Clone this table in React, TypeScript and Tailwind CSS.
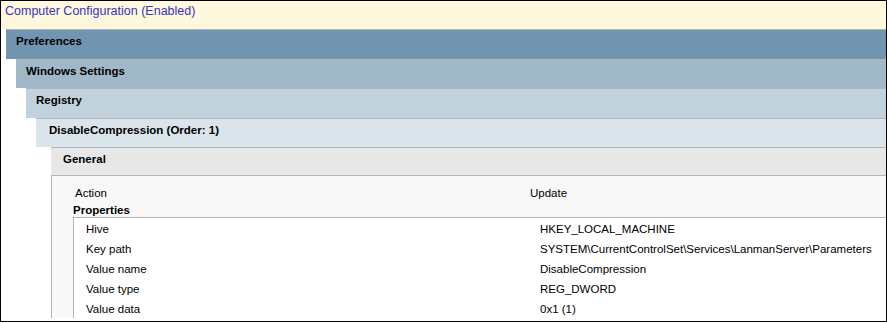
import type { ReactNode } from 'react'

// 設定レポートの1行分 (ラベル / 値)
type Row = { label: string; value: string }

const ROWS: Row[] = [
  { label: 'Hive', value: 'HKEY_LOCAL_MACHINE' },
  { label: 'Key path', value: 'SYSTEM\\CurrentControlSet\\Services\\LanmanServer\\Parameters' },
  { label: 'Value name', value: 'DisableCompression' },
  { label: 'Value type', value: 'REG_DWORD' },
  { label: 'Value data', value: '0x1 (1)' },
]

interface BandProps {
  title: string
  cls: string
  children?: ReactNode
}

// 見出し帯 + インデントされた子要素
function Band({ title, cls, children }: BandProps) {
  return (
    <div>
      <div className={['border-t border-[#b4b4b4] pt-[4px] text-[11.5px] leading-[14px] font-bold text-black', cls].join(' ')}>
        {title}
      </div>
      {children}
    </div>
  )
}

export default function App() {
  return (
    <div className="w-[887px] h-[323px] bg-white font-['Liberation_Sans',Arial,sans-serif]">
      <div className="h-[322px] border border-black overflow-hidden">
        <div className="h-[28px] bg-[#fff8dc] pl-[4px] pt-[3px] text-[12.5px] leading-[15px] text-[#3434c8]">
          Computer Configuration (Enabled)
        </div>

        <div className="pl-[5px]">
          <Band title="Preferences" cls="h-[30px] bg-[#7194b0] pl-[10px]">
            <div className="pl-[10px]">
              <Band title="Windows Settings" cls="h-[29px] bg-[#a1b8c8] pl-[10px]">
                <div className="pl-[10px]">
                  <Band title="Registry" cls="h-[30px] bg-[#c1d2dc] pl-[10px]">
                    <div className="pl-[10px]">
                      <Band title="DisableCompression (Order: 1)" cls="h-[29px] bg-[#d9e4eb] pl-[13px]">
                        <div className="pl-[15px]">
                          <Band title="General" cls="h-[29px] bg-[#e7e7e7] pl-[12px] border-b">
                            <div className="border-l border-[#b4b4b4] bg-[#f8f8f8] text-[11.5px] leading-[13px] text-black">
                              <div className="flex pt-[11px]">
                                <div className="w-[478px] pl-[23px]">Action</div>
                                <div>Update</div>
                              </div>
                              <div className="pl-[21px] pt-[4px] text-[11.5px] leading-[13px] font-bold">Properties</div>
                              <div className="ml-[21px] border-l border-t border-[#b4b4b4] bg-white">
                                {ROWS.map(r => (
                                  <div key={r.label} className="flex h-[20px] pt-[5px]">
                                    <div className="w-[466px] pl-[12px]">{r.label}</div>
                                    <div>{r.value}</div>
                                  </div>
                                ))}
                              </div>
                            </div>
                          </Band>
                        </div>
                      </Band>
                    </div>
                  </Band>
                </div>
              </Band>
            </div>
          </Band>
        </div>
      </div>
    </div>
  )
}
